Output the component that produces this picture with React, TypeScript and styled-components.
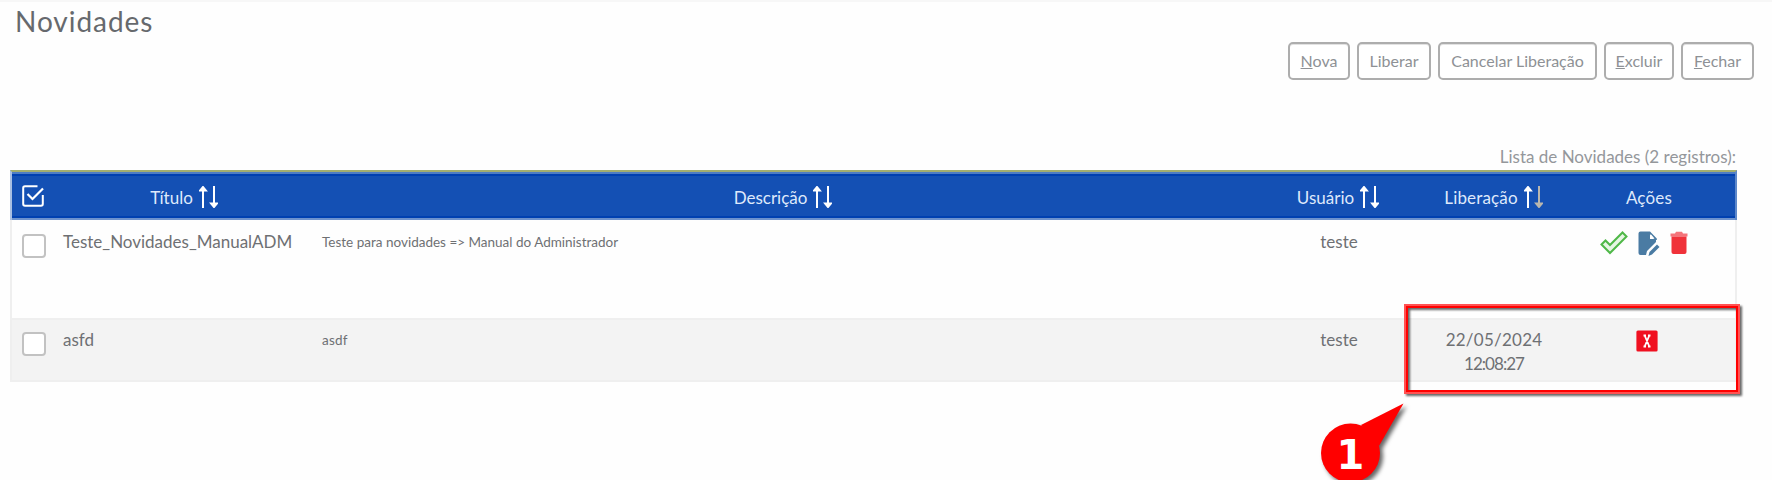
import React from "react";
import styled, { createGlobalStyle } from "styled-components";

const Global = createGlobalStyle`
  * { box-sizing: border-box; }
  body { margin: 0; background: #fefefe; font-family: Lato, "Open Sans", sans-serif; color: #6e7073; }
`;

const Page = styled.main`
  position: relative;
  display: flex;
  flex-direction: column;
  width: 1772px;
  height: 480px;
  overflow: hidden;
  border-top: 2px solid #f7f7f7;
`;

const Title = styled.h1`
  margin: 0;
  height: 40px;
  padding-left: 15px;
  font-size: 28px;
  line-height: 38px;
  font-weight: 400;
  color: #66696d;
`;

const Text = styled.span<{ $size?: number; $spacing?: number }>`
  font-size: ${(p) => p.$size ?? 17}px;
  letter-spacing: ${(p) => p.$spacing ?? 0}px;
  white-space: nowrap;
`;

const Toolbar = styled.div`
  display: flex;
  justify-content: flex-end;
  gap: 7px;
  height: 38px;
  padding-right: 18px;
`;

const Button = styled.button<{ $width: number }>`
  width: ${(p) => p.$width}px;
  height: 38px;
  padding: 0;
  border: 2px solid #adadad;
  border-radius: 5px;
  background: #fff;
  box-shadow: inset 0 1px 0 #e2e2e2;
  font-family: inherit;
  color: #8e9195;
  line-height: 33px;
`;

const Caption = styled.div`
  display: flex;
  justify-content: flex-end;
  align-items: flex-end;
  height: 90px;
  padding: 0 36px 3px 0;
  color: #94979b;
`;

const Table = styled.section`
  width: 1727px;
  margin-left: 10px;
`;

const columns = "41px 258px 944px 166px 145px 164px";

const Row = styled.div<{ $height: number; $alt?: boolean }>`
  display: grid;
  grid-template-columns: ${columns};
  height: ${(p) => p.$height}px;
  padding-top: ${(p) => (p.$alt ? 8 : 10)}px;
  background: ${(p) => (p.$alt ? "#f3f3f3" : "#fefefe")};
  border: 2px solid #efefef;
  border-top-width: ${(p) => (p.$alt ? 2 : 0)}px;
  border-bottom-width: ${(p) => (p.$alt ? 2 : 0)}px;
`;

const HeadRow = styled.div`
  display: grid;
  grid-template-columns: ${columns};
  height: 50px;
  background: #1450b4;
  border-top: 2px solid #a3ae70;
  border-left: 2px solid #a9bfe2;
  border-right: 2px solid #5e88ca;
  box-shadow: inset 0 2px 0 #4e7dc4, inset 0 4px 0 #0040b0, inset 0 -2px 0 #6d92cd, inset 0 -4px 0 #0040b0;
  color: #dfe9fb;
`;

const HeadCell = styled.div<{ $shift?: number; $drop?: number }>`
  display: flex;
  align-items: center;
  justify-content: center;
  gap: 6px;
  padding-left: ${(p) => p.$shift ?? 0}px;
  padding-top: ${(p) => p.$drop ?? 2}px;
`;

const Cell = styled.div<{ $center?: boolean; $left?: number; $right?: number }>`
  display: flex;
  flex-direction: column;
  align-items: ${(p) => (p.$center ? "center" : "flex-start")};
  padding-left: ${(p) => p.$left ?? 0}px;
  padding-right: ${(p) => p.$right ?? 0}px;
  line-height: 24px;
`;

const Check = styled.span`
  width: 24px;
  height: 24px;
  margin-top: 4px;
  border: 2px solid #c2c2c2;
  border-radius: 4px;
  background: #fff;
`;

const Actions = styled.div<{ $top: number }>`
  display: flex;
  gap: 10px;
  height: 26px;
  margin-top: ${(p) => p.$top}px;
`;

const Highlight = styled.div`
  position: absolute;
  left: 1404px;
  top: 302px;
  width: 336px;
  height: 90px;
  border: 2px solid #ff5252;
  box-shadow: inset 0 0 0 2px #ff0000;
  filter: drop-shadow(2px 2px 1px rgba(0, 0, 0, 0.6));
`;

const Callout = styled.div`
  position: absolute;
  left: 1320px;
  top: 398px;
  width: 90px;
  height: 80px;
  filter: drop-shadow(3px 3px 2px rgba(0, 0, 0, 0.6));
`;

const Marker = styled.span`
  position: absolute;
  left: 1336px;
  top: 429px;
  width: 29px;
  text-align: center;
  font: bold 40px/48px "DejaVu Sans", sans-serif;
  color: #fff;
`;

const SortIcon = ({ dim }: { dim?: boolean }) => (
  <svg width="19" height="22" viewBox="0 0 19 22" fill="none">
    <path d="M4 22V2M1.2 4.4L4 1L6.8 4.4Z" stroke="#fff" strokeWidth="2" fill="#fff" />
    <path
      d="M15 0V20M12.2 17.6L15 21L17.8 17.6Z"
      stroke={dim ? "#b9b6ae" : "#fff"}
      strokeWidth="2"
      fill={dim ? "#b9b6ae" : "#fff"}
    />
  </svg>
);

const SelectAll = () => (
  <svg width="22" height="22" viewBox="0 0 22 22" fill="none" stroke="#fff" strokeWidth="2">
    <path d="M15.5 1.2H3Q1.2 1.2 1.2 3V19Q1.2 20.8 3 20.8H19Q20.8 20.8 20.8 19V10" />
    <path d="M5.5 9L10.5 14L21 3.5" strokeWidth="2.2" />
  </svg>
);

const Approve = () => (
  <svg width="28" height="24" viewBox="0 0 28 24" fill="#e6f6e4" stroke="#4fb848" strokeWidth="2">
    <path d="M1.5 13.5L5.5 9.5L10 14L22.5 1.5L26.5 5.5L10 22Z" />
  </svg>
);

const Edit = () => (
  <svg width="22" height="26" viewBox="0 0 22 26">
    <path d="M2.5 0.5H12V8H18V11L9 20L8 24H2.5Q0.5 24 0.5 22V2.5Q0.5 0.5 2.5 0.5Z" fill="#4a7ba3" />
    <path d="M12 0.5L18.8 7.5V9H17L12 3Z" fill="#4a7ba3" />
    <path d="M13 3.5L16.5 7.5H13Z" fill="#fff" />
    <path d="M10.5 25L11.5 21L19 13.5L21.5 16L14 23.5Z" fill="#4a7ba3" />
  </svg>
);

const Trash = () => (
  <svg width="18" height="24" viewBox="0 0 18 24">
    <path d="M0.5 2.5H5L6 0.8H12L13 2.5H17.5V5.5H0.5Z" fill="#f4747a" />
    <path d="M1.5 5.5H16.5V21Q16.5 23 14.5 23H3.5Q1.5 23 1.5 21Z" fill="#f0323a" />
  </svg>
);

const Revoke = () => (
  <svg width="22" height="22" viewBox="0 0 22 22">
    <rect x="0.4" y="0.4" width="21.2" height="21.2" rx="1.5" fill="#f01020" />
    <path
      d="M7.5 5.5H10M12 5.5H14.5M7.5 16.5H10M12 16.5H14.5M8.7 5.5L13.3 16.5M13.3 5.5L8.7 16.5"
      stroke="#fff"
      strokeWidth="1.8"
    />
  </svg>
);

export default function App() {
  return (
    <>
      <Global />
      <Page>
        <Title><Text $size={28} $spacing={0.95}>Novidades</Text></Title>
        <Toolbar>
          <Button $width={62}><Text $size={16}><u>N</u>ova</Text></Button>
          <Button $width={74}><Text $size={16}>Liberar</Text></Button>
          <Button $width={159}><Text $size={16}>Cancelar Liberação</Text></Button>
          <Button $width={70}><Text $size={16}><u>E</u>xcluir</Text></Button>
          <Button $width={73}><Text $size={16}><u>F</u>echar</Text></Button>
        </Toolbar>
        <Caption><Text>Lista de Novidades (2 registros):</Text></Caption>
        <Table>
          <HeadRow>
            <HeadCell $drop={0}><SelectAll /></HeadCell>
            <HeadCell $shift={4}><Text>Título</Text><SortIcon /></HeadCell>
            <HeadCell><Text>Descrição</Text><SortIcon /></HeadCell>
            <HeadCell><Text>Usuário</Text><SortIcon /></HeadCell>
            <HeadCell><Text $spacing={0.15}>Liberação</Text><SortIcon dim /></HeadCell>
            <HeadCell $shift={2}><Text $spacing={0.2}>Ações</Text></HeadCell>
          </HeadRow>
          <Row $height={98}>
            <Cell $left={10}><Check /></Cell>
            <Cell $left={10}><Text>Teste_Novidades_ManualADM</Text></Cell>
            <Cell $left={11}><Text $size={13.5}>Teste para novidades =&gt; Manual do Administrador</Text></Cell>
            <Cell $center $left={2}><Text>teste</Text></Cell>
            <Cell />
            <Cell $center $right={8}><Actions $top={1}><Approve /><Edit /><Trash /></Actions></Cell>
          </Row>
          <Row $height={64} $alt>
            <Cell $left={10}><Check /></Cell>
            <Cell $left={10}><Text>asfd</Text></Cell>
            <Cell $left={11}><Text $size={13.5} $spacing={0.2}>asdf</Text></Cell>
            <Cell $center $left={2}><Text>teste</Text></Cell>
            <Cell $center $left={1}><Text $spacing={0.25}>22/05/2024</Text><Text $spacing={-0.95}>12:08:27</Text></Cell>
            <Cell $center $right={2}><Actions $top={2}><Revoke /></Actions></Cell>
          </Row>
        </Table>
        <Highlight />
        <Callout>
          <svg width="90" height="82" viewBox="1320 400 90 82">
            <path d="M1361 425L1403.5 403.5L1379 446Z" fill="#f00" />
            <circle cx="1350.5" cy="453" r="29.5" fill="#f00" />
          </svg>
        </Callout>
        <Marker>1</Marker>
      </Page>
    </>
  );
}
